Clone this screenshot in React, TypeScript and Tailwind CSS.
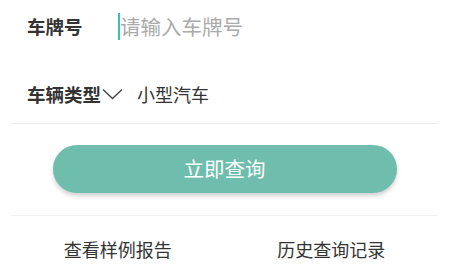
import React from "react";

export default function App() {
  const font = { fontFamily: '"Noto Sans CJK SC", "Noto Sans", sans-serif' };
  return (
    <div className="w-[449px] h-[267px] bg-white overflow-hidden" style={font}>
      <div className="px-[11px]">
        <div className="h-[52px] flex items-center pl-[16px]">
          <div className="w-[91px] text-[18.5px] leading-[18px] font-bold text-[#333]">车牌号</div>
          <div className="w-[2px] h-[27px] bg-[#37c2b3]" />
          <div className="text-[20.5px] leading-[20px] text-[#aaa]">请输入车牌号</div>
        </div>
        <div className="h-[36px] mt-[24px] flex items-center pl-[16px]">
          <div className="text-[18.5px] leading-[18px] font-bold text-[#333]">车辆类型</div>
          <svg width="21" height="12" viewBox="0 0 21 12" className="ml-[1px]">
            <polyline points="1,1.5 10.5,10.5 20,1.5" fill="none" stroke="#444" strokeWidth="1.4" />
          </svg>
          <div className="ml-[14px] text-[18px] leading-[18px] text-[#333]">小型汽车</div>
        </div>
        <div className="mt-[11px] h-px bg-[#ececec]" />
        <div className="mt-[21px] mx-auto w-[344px] h-[48px] rounded-full bg-[#6fbdac] shadow-[0_3px_4px_rgba(0,0,0,0.18)] flex items-center justify-center text-white text-[20.5px]">
          <span className="-mt-[2px]">立即查询</span>
        </div>
        <div className="mt-[22px] h-px bg-[#f0f0f0]" />
        <div className="flex mt-[23px]">
          <div className="flex-1 text-center text-[18px] leading-[20px] text-[#333]">查看样例报告</div>
          <div className="flex-1 text-center text-[18px] leading-[20px] text-[#333]">历史查询记录</div>
        </div>
      </div>
    </div>
  );
}
